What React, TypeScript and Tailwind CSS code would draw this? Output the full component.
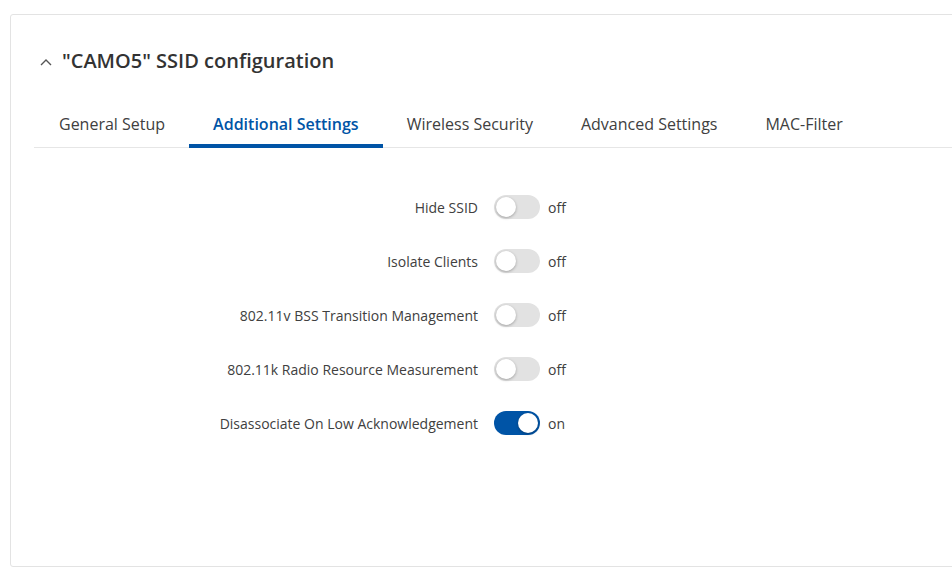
import { useState } from "react";

const tabs = ["General Setup", "Additional Settings", "Wireless Security", "Advanced Settings", "MAC-Filter"];

const initialRows = [
    { label: "Hide SSID", on: false },
    { label: "Isolate Clients", on: false },
    { label: "802.11v BSS Transition Management", on: false },
    { label: "802.11k Radio Resource Measurement", on: false },
    { label: "Disassociate On Low Acknowledgement", on: true },
];

function Toggle({ on, onClick }: { on: boolean; onClick: () => void }) {
    return (
        <button
            onClick={onClick}
            className={`relative h-[24px] w-[46px] shrink-0 rounded-full ${on ? "bg-[#0054a6]" : "bg-[#e2e2e2]"}`}
        >
            <span
                className={`absolute top-[2px] h-[20px] w-[20px] rounded-full bg-white shadow-[0_1px_3px_rgba(0,0,0,0.3)] ${on ? "left-[24px]" : "left-[2px]"}`}
            ></span>
        </button>
    );
}

export default function App() {
    const [rows, setRows] = useState(initialRows);
    const [active, setActive] = useState(1);

    return (
        <div className="h-[577px] w-[952px] overflow-hidden bg-white pl-[10px] pt-[14px] text-[#404040] [font-family:'Open_Sans',sans-serif]">
            <div className="h-[553px] w-[980px] rounded-[3px] border border-[#e3e3e3] bg-white pl-[23px]">
                <div className="mt-[32px] flex h-[28px] items-center gap-[10px] pl-[6px]">
                    <svg width="12" height="8" viewBox="0 0 12 8" fill="none" className="mt-[1px]">
                        <polyline points="1,7 6,2 11,7" stroke="#555" strokeWidth="1.4" />
                    </svg>
                    <h1 className="text-[20px] font-semibold leading-[28px] text-[#333]">"CAMO5" SSID configuration</h1>
                </div>

                <div className="mt-[27px] flex border-b border-[#e6e6e6] pl-[1px]">
                    {tabs.map((t, i) => (
                        <button
                            key={t}
                            onClick={() => setActive(i)}
                            className={`-mb-px border-b-4 px-[24px] pt-[10px] pb-[8px] text-[16px] leading-[24px] ${
                                i === active ? "border-[#0054a6] font-semibold text-[#0054a6]" : "border-transparent text-[#404040]"
                            }`}
                        >
                            {t}
                        </button>
                    ))}
                </div>

                <div className="mt-[47px] flex flex-col gap-[30px]">
                    {rows.map((r, i) => (
                        <div key={r.label} className="flex h-[24px] items-center">
                            <div className="w-[460px] pr-[16px] text-right text-[14px] text-[#404040]">{r.label}</div>
                            <Toggle
                                on={r.on}
                                onClick={() => setRows(rows.map((x, j) => (j === i ? { ...x, on: !x.on } : x)))}
                            />
                            <span className="ml-[8px] text-[14px] text-[#404040]">{r.on ? "on" : "off"}</span>
                        </div>
                    ))}
                </div>
            </div>
        </div>
    );
}
